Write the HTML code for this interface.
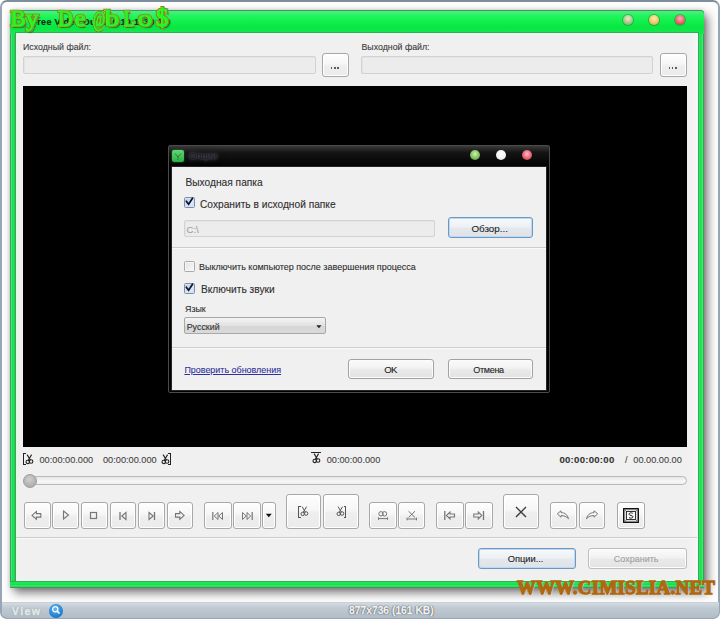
<!DOCTYPE html>
<html><head><meta charset="utf-8"><style>
*{box-sizing:border-box;margin:0;padding:0}
html,body{width:720px;height:619px;overflow:hidden;background:#fff}
body{position:relative;font-family:"Liberation Sans",sans-serif;color:#333}
.a{position:absolute}
.t{white-space:nowrap;line-height:1;-webkit-text-stroke:0.1px currentColor}
#frame{left:0;top:0;width:720px;height:619px;border:2px solid #97a6b4;border-top-color:#7f8e9c;border-radius:7px;background:#fdfdfd}
#win{left:9.5px;top:10px;width:694px;height:578px;background:linear-gradient(90deg,#3c9c5a 0,#3c9c5a 1px,#3ded70 1.5px,#14e34e 2.5px,#22e85a 4px,#34a655 5px,#34a655 5.5px,transparent 5.6px),#1fe656;border-radius:4px 4px 1px 1px;box-shadow:4px 5px 10px rgba(0,0,0,.5),0 0 4px rgba(0,0,0,.18)}
#winr{right:0;top:0;width:6px;height:100%;background:linear-gradient(90deg,#34a655 0,#34a655 0.6px,#22e85a 1.5px,#14e34e 3px,#3ded70 4.5px,#3c9c5a 5.4px);border-radius:0 4px 1px 0}
#winb{left:0;bottom:0;width:100%;height:7px;background:linear-gradient(#34a655 0,#34a655 0.6px,#22e85a 1.5px,#14e34e 3.5px,#3ded70 5px,#3c9c5a 6.4px);border-radius:0 0 1px 1px}
#title{left:0;top:0;width:694px;height:24px;border-top:1px solid #3b9a57;background:linear-gradient(#56eb86 0,#24f560 18%,#12ef4c 45%,#07e742 70%,#1ce552 100%);border-radius:4px 4px 0 0}
#content{left:5px;top:21.8px;width:684px;height:550.2px;background:#f0f0f0;border:1px solid #3aa85a;box-shadow:inset 0 0 0 1.5px #e2fce8}
.inp{background:#ececec;border:1px solid #d2d2d2;border-radius:2px;box-shadow:inset 1px 1px 0 #e4e4e4}
.btn{background:linear-gradient(#fbfbfb,#f2f2f2 45%,#e9e9e9 55%,#e3e3e3);border:1px solid #a2a2a2;border-radius:3px;box-shadow:inset 0 0 0 1px #fcfcfc}
.btnf{background:linear-gradient(#f7f9fb,#eef1f4 45%,#e4e8ec 55%,#dfe3e8);border:1px solid #6c98c2;border-radius:3px;box-shadow:inset 0 0 0 1px #bcd8f2}
.tb{background:linear-gradient(#fefefe,#f6f6f6 45%,#eeeeee 55%,#ebebeb);border:1px solid #a8a8a8;border-radius:3px;box-shadow:inset 0 0 0 1px #fff}
#video{left:23px;top:86px;width:664px;height:361px;background:#000}
#dlg{left:168px;top:145px;width:382px;height:248px;background:#000;border:1px solid #4a4a4a;border-radius:2px}
#dtitle{left:0;top:0;width:380px;height:22px;background:linear-gradient(#3a3a3a,#141414 30%,#000)}
#dcont{left:3px;top:21px;width:374px;height:223px;background:#f0f0f0;box-shadow:0 0 0 1px #262626}
.circ{border-radius:50%}
#status{left:1.5px;top:601.5px;width:717px;height:16px;background:linear-gradient(#d3dae0,#bfc9d2 35%,#b0bcc7);border-radius:0 0 6px 6px;border-top:1px solid #c8d0d6}
.sep{height:1px;background:#cdcdcd;border-bottom:1px solid #fafafa;box-sizing:content-box}
</style></head><body>
<div id="frame" class="a"></div>
<div id="win" class="a"><div id="winr" class="a"></div><div id="winb" class="a"></div><div id="title" class="a"></div><div id="content" class="a"></div><div class="a" style="left:678px;top:24px;width:10px;height:546px;background:linear-gradient(90deg,rgba(246,246,250,0),#f6f6fa)"></div></div>
<div class="a circ" style="left:622.5px;top:15px;width:10px;height:10px;background:radial-gradient(circle at 50% 35%,#e4efc8,#a8c080 60%,#7d9a58);box-shadow:0 0 0 1px rgba(30,120,60,.45)"></div>
<div class="a circ" style="left:648.5px;top:15px;width:10px;height:10px;background:radial-gradient(circle at 50% 35%,#fff0b0,#f2c060 60%,#c88a30);box-shadow:0 0 0 1px rgba(30,120,60,.45)"></div>
<div class="a circ" style="left:674.5px;top:15px;width:10px;height:10px;background:radial-gradient(circle at 50% 35%,#ffb0b8,#e85868 60%,#b83040);box-shadow:0 0 0 1px rgba(30,120,60,.45)"></div>
<div class="a t" style="left:23px;top:43.35px;font-size:8.8px;color:#3a3a3a;">Исходный файл:</div>
<div class="a t" style="left:361.5px;top:43.35px;font-size:8.8px;color:#3a3a3a;">Выходной файл:</div>
<div class="a inp" style="left:23px;top:56px;width:293px;height:18px;"></div>
<div class="a tb" style="left:322px;top:53px;width:27px;height:24px;"></div>
<div class="a inp" style="left:361px;top:56px;width:292px;height:18px;"></div>
<div class="a tb" style="left:660px;top:53px;width:27px;height:24px;"></div>
<div class="a" style="left:330.8px;top:67px;width:1.6px;height:2px;background:#5c5c5c"></div>
<div class="a" style="left:334.1px;top:67px;width:1.6px;height:2px;background:#5c5c5c"></div>
<div class="a" style="left:337.40000000000003px;top:67px;width:1.6px;height:2px;background:#5c5c5c"></div>
<div class="a" style="left:668.6px;top:67px;width:1.6px;height:2px;background:#5c5c5c"></div>
<div class="a" style="left:671.9px;top:67px;width:1.6px;height:2px;background:#5c5c5c"></div>
<div class="a" style="left:675.2px;top:67px;width:1.6px;height:2px;background:#5c5c5c"></div>
<div id="video" class="a"></div>
<div class="a" style="left:23px;top:453px;width:3px;height:12px;border:1.2px solid #222;border-right:none"></div>
<svg class="a" style="left:25px;top:453.6px" width="9" height="11" viewBox="0 0 9 11"><g fill="none" stroke="#222" stroke-width="1.1"><path d="M2.1 0.6 L5.4 6.2 M6.6 0.6 L3.3 6.2"/><circle cx="2.7" cy="7.9" r="1.7"/><circle cx="6.1" cy="7.5" r="1.75"/></g></svg>
<div class="a t" style="left:39.5px;top:456.01px;font-size:9.2px;color:#444;">00:00:00.000</div>
<div class="a t" style="left:103px;top:456.01px;font-size:9.2px;color:#444;">00:00:00.000</div>
<svg class="a" style="left:160.5px;top:453.6px" width="9" height="11" viewBox="0 0 9 11"><g fill="none" stroke="#222" stroke-width="1.1"><path d="M2.1 0.6 L5.4 6.2 M6.6 0.6 L3.3 6.2"/><circle cx="2.7" cy="7.9" r="1.7"/><circle cx="6.1" cy="7.5" r="1.75"/></g></svg>
<div class="a" style="left:168px;top:453px;width:3px;height:12px;border:1.2px solid #222;border-left:none"></div>
<div class="a" style="left:311px;top:452px;width:10px;height:1.3px;background:#222"></div>
<svg class="a" style="left:311.6px;top:453.3px" width="9" height="11" viewBox="0 0 9 11"><g fill="none" stroke="#222" stroke-width="1.1"><path d="M2.1 0.6 L5.4 6.2 M6.6 0.6 L3.3 6.2"/><circle cx="2.7" cy="7.9" r="1.7"/><circle cx="6.1" cy="7.5" r="1.75"/></g></svg>
<div class="a t" style="left:326.7px;top:456.01px;font-size:9.2px;color:#444;">00:00:00.000</div>
<div class="a t" style="left:559.4px;top:455.17px;font-size:9.6px;color:#333;font-weight:bold;letter-spacing:0.26px">00:00:00:00</div>
<div class="a t" style="left:625px;top:456.01px;font-size:9.2px;color:#444;">/</div>
<div class="a t" style="left:633.3px;top:456.01px;font-size:9.2px;color:#444;">00.00.00.00</div>
<div class="a" style="left:30px;top:476px;width:657px;height:9px;border:1px solid #b9b9b9;border-radius:5px;background:linear-gradient(#e6e6e6,#f7f7f7 60%,#eeeeee)"></div>
<div class="a circ" style="left:23.2px;top:473.8px;width:14px;height:14px;border:1px solid #9c9c9c;background:radial-gradient(circle at 45% 35%,#cfcfcf,#b4b4b4 60%,#a3a3a3)"></div>
<div class="a tb" style="left:23.5px;top:501.7px;width:27.0px;height:27.599999999999966px;"></div>
<div class="a tb" style="left:52px;top:501.7px;width:27px;height:27.599999999999966px;"></div>
<div class="a tb" style="left:80.5px;top:501.7px;width:27.0px;height:27.599999999999966px;"></div>
<div class="a tb" style="left:109.5px;top:501.7px;width:26.5px;height:27.599999999999966px;"></div>
<div class="a tb" style="left:138.25px;top:501.7px;width:26.25px;height:27.599999999999966px;"></div>
<div class="a tb" style="left:166.9px;top:501.7px;width:26.349999999999994px;height:27.599999999999966px;"></div>
<div class="a tb" style="left:204.4px;top:501.7px;width:27.299999999999983px;height:27.599999999999966px;"></div>
<div class="a tb" style="left:233.3px;top:501.7px;width:27.30000000000001px;height:27.599999999999966px;"></div>
<div class="a tb" style="left:369.4px;top:501.7px;width:27.30000000000001px;height:27.599999999999966px;"></div>
<div class="a tb" style="left:398.2px;top:501.7px;width:27.19999999999999px;height:27.599999999999966px;"></div>
<div class="a tb" style="left:436.3px;top:501.7px;width:27.30000000000001px;height:27.599999999999966px;"></div>
<div class="a tb" style="left:465.3px;top:501.7px;width:27.599999999999966px;height:27.599999999999966px;"></div>
<div class="a tb" style="left:550.2px;top:501.7px;width:26.399999999999977px;height:27.599999999999966px;"></div>
<div class="a tb" style="left:579.1px;top:501.7px;width:26.199999999999932px;height:27.599999999999966px;"></div>
<div class="a tb" style="left:616.8px;top:501.7px;width:27.800000000000068px;height:27.599999999999966px;"></div>
<div class="a tb" style="left:262px;top:501.7px;width:13.5px;height:27.599999999999966px;"></div>
<div class="a tb" style="left:286.2px;top:494.4px;width:35.19999999999999px;height:35.10000000000002px;"></div>
<div class="a tb" style="left:323px;top:494.4px;width:35.69999999999999px;height:35.10000000000002px;"></div>
<div class="a tb" style="left:503.3px;top:494.4px;width:35.900000000000034px;height:35.10000000000002px;"></div>
<svg class="a" style="left:31px;top:509.5px" width="12" height="11" viewBox="0 0 12 11"><path d="M1.1 5.4 L5.4 1.4 V3.6 H9.8 V7.1 H5.4 V9.3 Z" fill="none" stroke="#767676" stroke-width="1.1" stroke-linejoin="miter"/></svg>
<svg class="a" style="left:62px;top:510px" width="8" height="10" viewBox="0 0 8 10"><path d="M1.5 1 L6.5 5 L1.5 9 Z" fill="none" stroke="#767676" stroke-width="1.1"/></svg>
<svg class="a" style="left:89px;top:510.5px" width="9" height="9" viewBox="0 0 9 9"><rect x="1.5" y="1.5" width="6" height="6" fill="none" stroke="#767676" stroke-width="1.2"/></svg>
<svg class="a" style="left:117.5px;top:510.5px" width="10" height="10" viewBox="0 0 10 10"><path d="M2 1 V9" stroke="#767676" stroke-width="1.3"/><path d="M8 1.5 L3.8 5 L8 8.5 Z" fill="none" stroke="#767676" stroke-width="1.1"/></svg>
<svg class="a" style="left:146.5px;top:510.5px" width="10" height="10" viewBox="0 0 10 10"><path d="M7.5 1 V9" stroke="#767676" stroke-width="1.3"/><path d="M2 1.5 L6.2 5 L2 8.5 Z" fill="none" stroke="#767676" stroke-width="1.1"/></svg>
<svg class="a" style="left:174px;top:509.5px" width="12" height="11" viewBox="0 0 12 11"><path d="M10.1 5.4 L5.8 1.4 V3.6 H1.5 V7.1 H5.8 V9.3 Z" fill="none" stroke="#767676" stroke-width="1.1"/></svg>
<svg class="a" style="left:211px;top:510.5px" width="13" height="10" viewBox="0 0 13 10"><path d="M1.8 1 V9" stroke="#767676" stroke-width="1.2"/><path d="M7 1.5 L3.3 5 L7 8.5 Z M11.5 1.5 L7.8 5 L11.5 8.5 Z" fill="none" stroke="#767676" stroke-width="1"/></svg>
<svg class="a" style="left:241px;top:510.5px" width="13" height="10" viewBox="0 0 13 10"><path d="M11.2 1 V9" stroke="#767676" stroke-width="1.2"/><path d="M1.5 1.5 L5.2 5 L1.5 8.5 Z M6 1.5 L9.7 5 L6 8.5 Z" fill="none" stroke="#767676" stroke-width="1"/></svg>
<svg class="a" style="left:264.5px;top:513px" width="8" height="5" viewBox="0 0 8 5"><path d="M0.8 0.8 H6.8 L3.8 4.2 Z" fill="#111"/></svg>
<div class="a" style="left:298px;top:505.5px;width:2.5px;height:12.5px;border:1.1px solid #555;border-right:none"></div>
<svg class="a" style="left:300.3px;top:506.3px" width="9" height="11" viewBox="0 0 9 11"><g fill="none" stroke="#555" stroke-width="1"><path d="M2.1 0.6 L5.4 6.2 M6.6 0.6 L3.3 6.2"/><circle cx="2.7" cy="7.9" r="1.7"/><circle cx="6.1" cy="7.5" r="1.75"/></g></svg>
<svg class="a" style="left:335.6px;top:506.3px" width="9" height="11" viewBox="0 0 9 11"><g fill="none" stroke="#555" stroke-width="1"><path d="M2.1 0.6 L5.4 6.2 M6.6 0.6 L3.3 6.2"/><circle cx="2.7" cy="7.9" r="1.7"/><circle cx="6.1" cy="7.5" r="1.75"/></g></svg>
<div class="a" style="left:343.8px;top:505.5px;width:2.5px;height:12.5px;border:1.1px solid #555;border-left:none"></div>
<svg class="a" style="left:377px;top:510px" width="12" height="11" viewBox="0 0 12 11"><g fill="none" stroke="#767676" stroke-width="1"><circle cx="4" cy="3.8" r="2.2"/><circle cx="7.5" cy="3.8" r="2.2"/><path d="M1.5 8.6 H10.5 M1.5 7.3 V9.9 M10.5 7.3 V9.9"/></g></svg>
<svg class="a" style="left:406px;top:509.5px" width="12" height="11" viewBox="0 0 12 11"><g fill="none" stroke="#767676" stroke-width="1"><path d="M2.5 1.2 L9 7.5 M9 1.2 L2.5 7.5"/><path d="M1 9 H10.5 M1 7.7 V10.3 M10.5 7.7 V10.3"/></g></svg>
<svg class="a" style="left:443px;top:509.5px" width="14" height="11" viewBox="0 0 14 11"><path d="M1.8 1 V10" stroke="#767676" stroke-width="1.3"/><path d="M3.5 5.5 L7 2 V4 H11.5 V7 H7 V9 Z" fill="none" stroke="#767676" stroke-width="1.1"/></svg>
<svg class="a" style="left:472px;top:509.5px" width="14" height="11" viewBox="0 0 14 11"><path d="M11.5 1 V10" stroke="#767676" stroke-width="1.3"/><path d="M9.8 5.5 L6.3 2 V4 H1.8 V7 H6.3 V9 Z" fill="none" stroke="#767676" stroke-width="1.1"/></svg>
<svg class="a" style="left:514px;top:505px" width="14" height="14" viewBox="0 0 14 14"><path d="M2 2 L12 12 M12 2 L2 12" stroke="#3c3c3c" stroke-width="1.4"/></svg>
<svg class="a" style="left:556px;top:510px" width="14" height="10" viewBox="0 0 14 10"><path d="M1.3 3.8 L5 0.8 V2.6 C9 2.6 11.5 4.8 12.5 8.8 C10.5 6.4 8 5.6 5 5.6 V7.2 Z" fill="none" stroke="#767676" stroke-width="1" stroke-linejoin="round"/></svg>
<svg class="a" style="left:585px;top:510px" width="14" height="10" viewBox="0 0 14 10"><path d="M12.7 3.8 L9 0.8 V2.6 C5 2.6 2.5 4.8 1.5 8.8 C3.5 6.4 6 5.6 9 5.6 V7.2 Z" fill="none" stroke="#767676" stroke-width="1" stroke-linejoin="round"/></svg>
<svg class="a" style="left:622.5px;top:507.5px" width="16" height="15" viewBox="0 0 16 15"><rect x="0.7" y="0.7" width="14.6" height="13.6" fill="#ddd" stroke="#111" stroke-width="1.4"/><path d="M0.7 0.7 L3.5 3.5 M15.3 0.7 L12.5 3.5 M0.7 14.3 L3.5 11.5 M15.3 14.3 L12.5 11.5" stroke="#666" stroke-width="0.8"/><rect x="3.5" y="3.5" width="9" height="8" fill="#fafafa" stroke="#333" stroke-width="1"/><path d="M9.8 5.3 C8.5 4.6 6 4.6 6 6.3 C6 7.6 10 7.3 10 8.8 C10 10.3 7.2 10.4 6 9.6" fill="none" stroke="#222" stroke-width="1"/></svg>
<div class="a sep" style="left:16px;top:537px;width:681px"></div>
<div class="a btnf" style="left:477.5px;top:548.3px;width:98.70000000000005px;height:20.5px;"></div>
<div class="a t" style="left:507.7px;top:554.63px;font-size:9.3px;color:#222;">Опции...</div>
<div class="a btn" style="left:587.5px;top:548.3px;width:99.5px;height:20.5px;border-color:#bdbdbd"></div>
<div class="a t" style="left:613.8px;top:554.88px;font-size:9.0px;color:#a0a0a0;">Сохранить</div>
<div id="dlg" class="a"><div id="dtitle" class="a"></div><div id="dcont" class="a"></div></div>
<div class="a" style="left:172px;top:150px;width:12px;height:12px;border-radius:2px;background:linear-gradient(#5fd872,#2fae48);box-shadow:0 0 2px rgba(80,255,120,.5)"></div>
<svg class="a" style="left:172px;top:150px" width="12" height="12" viewBox="0 0 12 12"><path d="M3 3.5 L6 7 L9 3.5 M6 7 V10" fill="none" stroke="#1d7a30" stroke-width="0.9"/></svg>
<div class="a t" style="left:189px;top:151.93px;font-size:9.3px;color:#121226;text-shadow:0 0 2px #777,0 0 5px #555,0 0 8px #444">Опции</div>
<div class="a circ" style="left:469.5px;top:150px;width:10px;height:10px;background:radial-gradient(circle at 50% 40%,#d0f0b0,#80c060 55%,#4a8a30)"></div>
<div class="a circ" style="left:496px;top:150px;width:10px;height:10px;background:radial-gradient(circle at 50% 40%,#ffffff,#f0f0f0 60%,#c8c8c8)"></div>
<div class="a circ" style="left:522px;top:150px;width:10px;height:10px;background:radial-gradient(circle at 50% 40%,#ffc0c8,#e86070 55%,#a83040)"></div>
<div class="a t" style="left:185.5px;top:177.97px;font-size:10.2px;color:#2e2e2e;">Выходная папка</div>
<div class="a" style="left:184.2px;top:197.4px;width:10.5px;height:10.5px;border:1px solid #7f8ea8;border-radius:1.5px;background:linear-gradient(135deg,#aec4e4,#dfeaf8 60%,#c8daf0);box-shadow:inset 0 0 0 1px #d6e2f2"></div>
<svg class="a" style="left:185.2px;top:197.4px" width="10" height="10" viewBox="0 0 10 10"><path d="M1.3 4.2 L3.6 7.3 L7.5 1.2" fill="none" stroke="#0c1430" stroke-width="1.7" stroke-linecap="round"/></svg>
<div class="a t" style="left:200px;top:200.17px;font-size:10.2px;color:#2e2e2e;">Сохранить в исходной папке</div>
<div class="a inp" style="left:184px;top:219.5px;width:251px;height:17.5px;"></div>
<div class="a t" style="left:186.5px;top:225.17px;font-size:9.6px;color:#a0a0a0;">C:\</div>
<div class="a btnf" style="left:447.5px;top:217px;width:85.5px;height:21px;"></div>
<div class="a t" style="left:471.4px;top:223.70px;font-size:9.8px;color:#222;">Обзор...</div>
<div class="a sep" style="left:172px;top:247px;width:374px"></div>
<div class="a" style="left:184.2px;top:261.3px;width:10.5px;height:10.5px;border:1px solid #a9a9a9;border-radius:1.5px;background:linear-gradient(135deg,#e2e2e2,#fafafa);box-shadow:inset 0 0 0 1px #f6f6f6"></div>
<div class="a t" style="left:199px;top:263.18px;font-size:9.0px;color:#2e2e2e;">Выключить компьютер после завершения процесса</div>
<div class="a" style="left:184.2px;top:283px;width:10.5px;height:10.5px;border:1px solid #7f8ea8;border-radius:1.5px;background:linear-gradient(135deg,#aec4e4,#dfeaf8 60%,#c8daf0);box-shadow:inset 0 0 0 1px #d6e2f2"></div>
<svg class="a" style="left:185.2px;top:283px" width="10" height="10" viewBox="0 0 10 10"><path d="M1.3 4.2 L3.6 7.3 L7.5 1.2" fill="none" stroke="#0c1430" stroke-width="1.7" stroke-linecap="round"/></svg>
<div class="a t" style="left:201px;top:285.27px;font-size:10.2px;color:#2e2e2e;">Включить звуки</div>
<div class="a t" style="left:185px;top:304.77px;font-size:8.9px;color:#2e2e2e;">Язык</div>
<div class="a" style="left:184px;top:317.3px;width:142px;height:17.2px;border:1px solid #a8a8a8;border-radius:2px;background:linear-gradient(#f4f4f4,#e2e2e2 50%,#d6d6d6 51%,#dadada)"></div>
<div class="a t" style="left:186.7px;top:322.77px;font-size:8.9px;color:#333;">Русский</div>
<svg class="a" style="left:316.3px;top:324.6px" width="6" height="4" viewBox="0 0 6 4"><path d="M0.3 0.3 H5.5 L2.9 3.2 Z" fill="#222"/></svg>
<div class="a sep" style="left:172px;top:347px;width:374px"></div>
<div class="a t" style="left:184.4px;top:365.52px;font-size:8.95px;color:#3030a0;text-decoration:underline">Проверить обновления</div>
<div class="a btn" style="left:347.8px;top:359.2px;width:86.59999999999997px;height:20.0px;"></div>
<div class="a t" style="left:384.2px;top:365.37px;font-size:9.6px;color:#222;letter-spacing:-0.6px">OK</div>
<div class="a btn" style="left:447.5px;top:359.2px;width:85.5px;height:20.0px;"></div>
<div class="a t" style="left:473.3px;top:365.88px;font-size:9.0px;color:#222;letter-spacing:-0.3px">Отмена</div>
<div id="status" class="a"></div>
<div class="a t" style="left:11.8px;top:605.64px;font-size:10.7px;color:#e6eaea;font-weight:bold;letter-spacing:1.4px;-webkit-text-stroke:0.6px #e2e6e6;text-shadow:0 0 1px #7a868f,0 0 1.5px #7a868f">View</div>
<div class="a circ" style="left:49px;top:603.5px;width:14px;height:14px;background:radial-gradient(circle at 45% 35%,#60b8f0,#1a7ad0 70%,#0c5aa8)"></div>
<svg class="a" style="left:50px;top:604px" width="12" height="12" viewBox="0 0 12 12"><circle cx="5.2" cy="5.2" r="2.6" fill="none" stroke="#fff" stroke-width="1.3"/><path d="M7 7 L9.5 9.5" stroke="#fff" stroke-width="1.6"/></svg>
<div class="a t" style="left:349px;top:605.58px;font-size:10.3px;color:#f2f2f2;font-weight:bold;-webkit-text-stroke:0.3px #f4f4f4;text-shadow:0 0 1px #3a4248,0 0 1px #3a4248,0 0 1.5px #5a6268">877x736 (161 KB)</div>
<div class="a" style="left:516.5px;top:578px;transform:scale(0.99,1.0);transform-origin:0 0;white-space:nowrap;line-height:1;font-family:'Liberation Serif',serif;font-weight:bold;font-size:19px;color:#b06a12;letter-spacing:0.35px;-webkit-text-stroke:1.3px #ad6610;text-shadow:0 0 1px #ffe0b0,0 0 1px #ffe0b0,1px 1px 1px rgba(255,230,190,.8)">WWW.CIMISLIA.NET</div>
<div class="a t" style="left:31.5px;top:18.48px;font-size:9px;color:#0a2a10;font-weight:bold;letter-spacing:0.3px">Free Video Dub 2.0.10.1130 1.0</div>
<div style="position:absolute;top:7.3px;transform-origin:0 19px;font-family:'Liberation Serif',serif;font-weight:normal;font-size:23px;white-space:nowrap;line-height:1;left:10.5px;transform:scale(1,1);color:#a07a22;-webkit-text-stroke:2.6px #a07a22;text-shadow:1.5px 1.5px 1px #1a6a24">B</div>
<div style="position:absolute;top:7.3px;transform-origin:0 19px;font-family:'Liberation Serif',serif;font-weight:normal;font-size:23px;white-space:nowrap;line-height:1;left:26.3px;transform:scale(1.1,1);color:#a07a22;-webkit-text-stroke:2.6px #a07a22;text-shadow:1.5px 1.5px 1px #1a6a24">y</div>
<div style="position:absolute;top:7.3px;transform-origin:0 19px;font-family:'Liberation Serif',serif;font-weight:normal;font-size:23px;white-space:nowrap;line-height:1;left:58.2px;transform:scale(0.9,1);color:#a07a22;-webkit-text-stroke:2.6px #a07a22;text-shadow:1.5px 1.5px 1px #1a6a24">D</div>
<div style="position:absolute;top:7.3px;transform-origin:0 19px;font-family:'Liberation Serif',serif;font-weight:normal;font-size:23px;white-space:nowrap;line-height:1;left:75.3px;transform:scale(1.05,1);color:#a07a22;-webkit-text-stroke:2.6px #a07a22;text-shadow:1.5px 1.5px 1px #1a6a24">e</div>
<div style="position:absolute;top:7.3px;transform-origin:0 19px;font-family:'Liberation Serif',serif;font-weight:normal;font-size:23px;white-space:nowrap;line-height:1;left:92.6px;transform:scale(0.58,0.95);color:#a07a22;-webkit-text-stroke:2.6px #a07a22;text-shadow:1.5px 1.5px 1px #1a6a24">@</div>
<div style="position:absolute;top:7.3px;transform-origin:0 19px;font-family:'Liberation Serif',serif;font-weight:normal;font-size:23px;white-space:nowrap;line-height:1;left:104.75px;transform:scale(1.25,1);color:#a07a22;-webkit-text-stroke:2.6px #a07a22;text-shadow:1.5px 1.5px 1px #1a6a24">b</div>
<div style="position:absolute;top:7.3px;transform-origin:0 19px;font-family:'Liberation Serif',serif;font-weight:normal;font-size:23px;white-space:nowrap;line-height:1;left:123.5px;transform:scale(0.75,1);color:#a07a22;-webkit-text-stroke:2.6px #a07a22;text-shadow:1.5px 1.5px 1px #1a6a24">L</div>
<div style="position:absolute;top:7.3px;transform-origin:0 19px;font-family:'Liberation Serif',serif;font-weight:normal;font-size:23px;white-space:nowrap;line-height:1;left:138px;transform:scale(1.25,1);color:#a07a22;-webkit-text-stroke:2.6px #a07a22;text-shadow:1.5px 1.5px 1px #1a6a24">o</div>
<div style="position:absolute;top:7.3px;transform-origin:0 19px;font-family:'Liberation Serif',serif;font-weight:normal;font-size:23px;white-space:nowrap;line-height:1;left:155.5px;transform:scale(1.1,1.08);color:#a07a22;-webkit-text-stroke:2.6px #a07a22;text-shadow:1.5px 1.5px 1px #1a6a24">$</div>
<div style="position:absolute;top:7.3px;transform-origin:0 19px;font-family:'Liberation Serif',serif;font-weight:normal;font-size:23px;white-space:nowrap;line-height:1;left:10.5px;transform:scale(1,1);color:#22f822;-webkit-text-stroke:0.9px #22f822">B</div>
<div style="position:absolute;top:7.3px;transform-origin:0 19px;font-family:'Liberation Serif',serif;font-weight:normal;font-size:23px;white-space:nowrap;line-height:1;left:26.3px;transform:scale(1.1,1);color:#22f822;-webkit-text-stroke:0.9px #22f822">y</div>
<div style="position:absolute;top:7.3px;transform-origin:0 19px;font-family:'Liberation Serif',serif;font-weight:normal;font-size:23px;white-space:nowrap;line-height:1;left:58.2px;transform:scale(0.9,1);color:#22f822;-webkit-text-stroke:0.9px #22f822">D</div>
<div style="position:absolute;top:7.3px;transform-origin:0 19px;font-family:'Liberation Serif',serif;font-weight:normal;font-size:23px;white-space:nowrap;line-height:1;left:75.3px;transform:scale(1.05,1);color:#22f822;-webkit-text-stroke:0.9px #22f822">e</div>
<div style="position:absolute;top:7.3px;transform-origin:0 19px;font-family:'Liberation Serif',serif;font-weight:normal;font-size:23px;white-space:nowrap;line-height:1;left:92.6px;transform:scale(0.58,0.95);color:#22f822;-webkit-text-stroke:0.9px #22f822">@</div>
<div style="position:absolute;top:7.3px;transform-origin:0 19px;font-family:'Liberation Serif',serif;font-weight:normal;font-size:23px;white-space:nowrap;line-height:1;left:104.75px;transform:scale(1.25,1);color:#22f822;-webkit-text-stroke:0.9px #22f822">b</div>
<div style="position:absolute;top:7.3px;transform-origin:0 19px;font-family:'Liberation Serif',serif;font-weight:normal;font-size:23px;white-space:nowrap;line-height:1;left:123.5px;transform:scale(0.75,1);color:#22f822;-webkit-text-stroke:0.9px #22f822">L</div>
<div style="position:absolute;top:7.3px;transform-origin:0 19px;font-family:'Liberation Serif',serif;font-weight:normal;font-size:23px;white-space:nowrap;line-height:1;left:138px;transform:scale(1.25,1);color:#22f822;-webkit-text-stroke:0.9px #22f822">o</div>
<div style="position:absolute;top:7.3px;transform-origin:0 19px;font-family:'Liberation Serif',serif;font-weight:normal;font-size:23px;white-space:nowrap;line-height:1;left:155.5px;transform:scale(1.1,1.08);color:#22f822;-webkit-text-stroke:0.9px #22f822">$</div>
</body></html>
